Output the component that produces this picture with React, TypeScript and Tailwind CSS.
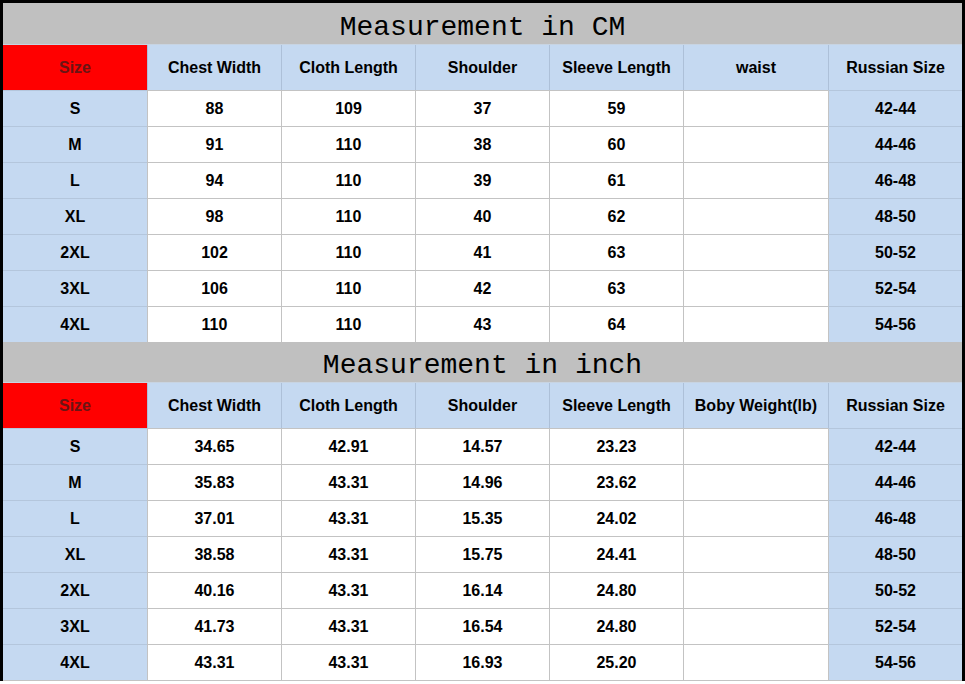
const cm = [
  ["S", "88", "109", "37", "59", "", "42-44"],
  ["M", "91", "110", "38", "60", "", "44-46"],
  ["L", "94", "110", "39", "61", "", "46-48"],
  ["XL", "98", "110", "40", "62", "", "48-50"],
  ["2XL", "102", "110", "41", "63", "", "50-52"],
  ["3XL", "106", "110", "42", "63", "", "52-54"],
  ["4XL", "110", "110", "43", "64", "", "54-56"],
];

const inch = [
  ["S", "34.65", "42.91", "14.57", "23.23", "", "42-44"],
  ["M", "35.83", "43.31", "14.96", "23.62", "", "44-46"],
  ["L", "37.01", "43.31", "15.35", "24.02", "", "46-48"],
  ["XL", "38.58", "43.31", "15.75", "24.41", "", "48-50"],
  ["2XL", "40.16", "43.31", "16.14", "24.80", "", "50-52"],
  ["3XL", "41.73", "43.31", "16.54", "24.80", "", "52-54"],
  ["4XL", "43.31", "43.31", "16.93", "25.20", "", "54-56"],
];

const cols = "grid grid-cols-[144px_134px_134px_134px_134px_145px_134px]";

function Section({ title, extra, rows }: { title: string; extra: string; rows: string[][] }) {
  const heads = ["Chest Width", "Cloth Length", "Shoulder", "Sleeve Length", extra, "Russian Size"];
  return (
    <div>
      <div className="h-[40px] bg-[#c0c0c0] flex items-center justify-center font-['Liberation_Mono',monospace] font-normal text-[28px] text-black leading-none pt-[7px]">
        {title}
      </div>
      <div className={`${cols} h-[46px] border-t border-[#c8d4e2]`}>
        <div className="bg-[#ff0000] flex items-center justify-center text-[#6a1414]">Size</div>
        {heads.map((h, i) => (
          <div key={i} className="bg-[#c5d9f1] border-l border-[#adc0d8] flex items-center justify-center">
            {h}
          </div>
        ))}
      </div>
      {rows.map((r, ri) => (
        <div key={ri} className={`${cols} h-[36px]`}>
          {r.map((c, ci) => {
            const blue = ci === 0 || ci === 6;
            return (
              <div
                key={ci}
                className={`flex items-center justify-center border-t border-[#c3c3c3] ${ci > 0 ? "border-l" : ""} ${
                  blue ? "bg-[#c5d9f1] border-t-[#b4c6dc]" : "bg-white"
                }`}
              >
                {c}
              </div>
            );
          })}
        </div>
      ))}
    </div>
  );
}

export default function App() {
  return (
    <div className="w-[965px] h-[684px] overflow-hidden bg-white font-['Liberation_Sans',Arial,sans-serif] font-bold text-[16px] text-black">
      <div className="border-[3px] border-b-0 border-black">
        <div className="h-[1px] bg-[#c0c0c0]" />
        <Section title="Measurement in CM" extra="waist" rows={cm} />
        <Section title="Measurement in inch" extra="Boby Weight(lb)" rows={inch} />
        <div className="h-[1px] bg-[#c3c3c3]" />
      </div>
    </div>
  );
}
